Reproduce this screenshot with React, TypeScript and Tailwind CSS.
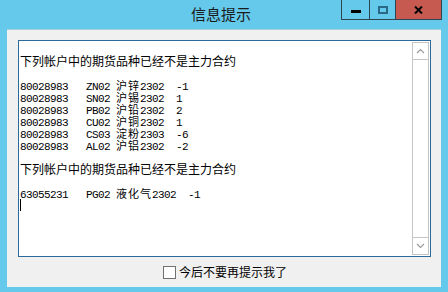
import React from 'react'

const cjk = '"Noto Sans CJK SC", "Noto Sans", sans-serif'
const mono = '"Liberation Mono", "Noto Sans CJK SC", monospace'

type Seg = string | { c: string }

// each line: plain ascii runs are 6px per char, cjk runs 12px per char
const rows: Seg[][] = [
  ['80028983   ZN02 ', { c: '沪锌' }, '2302  -1'],
  ['80028983   SN02 ', { c: '沪锡' }, '2302  1'],
  ['80028983   PB02 ', { c: '沪铅' }, '2302  2'],
  ['80028983   CU02 ', { c: '沪铜' }, '2302  1'],
  ['80028983   CS03 ', { c: '淀粉' }, '2303  -6'],
  ['80028983   AL02 ', { c: '沪铝' }, '2302  -2'],
]

function Line({ segs }: { segs: Seg[] }) {
  return (
    <div
      className="h-[12px] leading-[12px] whitespace-pre text-[11px] tracking-[-0.6px] text-black overflow-visible"
      style={{ fontFamily: mono }}
    >
      {segs.map((s, i) =>
        typeof s === 'string' ? (
          <span key={i}>{s}</span>
        ) : (
          <span key={i} className="text-[11px] leading-[12px] tracking-[1px]" style={{ fontFamily: cjk }}>{s.c}</span>
        )
      )}
    </div>
  )
}

function Heading() {
  return (
    <div className="h-[12px] leading-[12px] text-[12px] text-black whitespace-pre" style={{ fontFamily: cjk }}>
      下列帐户中的期货品种已经不是主力合约
    </div>
  )
}

function ScrollBar() {
  return (
    <div className="w-[17px] mt-[1px] mb-[1px] mr-[1px] flex flex-col border border-[#c4c4c4] bg-white">
      <div className="h-[17px] border-b border-[#c4c4c4] flex items-center justify-center">
        <svg width="9" height="6" viewBox="0 0 9 6">
          <path d="M1 5 L4.5 1.5 L8 5" fill="none" stroke="#9a9a9a" strokeWidth="1.2" />
        </svg>
      </div>
      <div className="flex-1" />
      <div className="h-[17px] border-t border-[#c4c4c4] flex items-center justify-center">
        <svg width="9" height="6" viewBox="0 0 9 6">
          <path d="M1 1 L4.5 4.5 L8 1" fill="none" stroke="#9a9a9a" strokeWidth="1.2" />
        </svg>
      </div>
    </div>
  )
}

export default function App() {
  return (
    <div className="w-[448px] h-[292px] bg-[#64c9ea] flex flex-col overflow-hidden">
      {/* Title bar */}
      <div className="h-[29px] flex shrink-0">
        <div className="flex-1" />
        <div className="pt-[3px] text-[15px] leading-[22px] text-[#1b1b1b]" style={{ fontFamily: cjk }}>
          信息提示
        </div>
        <div className="flex-1 flex justify-end items-start pr-[6px]">
          <div className="flex h-[20px] border border-t-0 border-[#2e4450]">
            <div className="w-[28px] flex items-center justify-center border-r border-[#2e4450]">
              <div className="w-[10px] h-[3px] bg-black mt-[3px]" />
            </div>
            <div className="w-[26px] flex items-center justify-center border-r border-[#2e4450]">
              <div className="w-[10px] h-[8px] border-2 border-[#2a6a86]" />
            </div>
            <div className="w-[45px] bg-[#c65a50] flex items-center justify-center">
              <svg width="9" height="8" viewBox="0 0 9 8">
                <path d="M1 0.5 L8 7.5 M8 0.5 L1 7.5" stroke="black" strokeWidth="2" />
              </svg>
            </div>
          </div>
        </div>
      </div>

      {/* Client area */}
      <div className="mx-[7px] h-[258px] bg-[#f0f0f0] border-t border-[#a8cfdd] flex flex-col">
        <div className="mt-[10px] ml-[11px] w-[413px] h-[217px] border border-[#2c6a9c] bg-white flex">
          <div className="flex-1 pl-[1px] pt-[14px] flex flex-col">
            <Heading />
            <div className="h-[12px]" />
            {rows.map((r, i) => (
              <Line key={i} segs={r} />
            ))}
            <div className="h-[12px]" />
            <Heading />
            <div className="h-[12px]" />
            <Line segs={['63055231   PG02 ', { c: '液化气' }, '2302  -1']} />
            <div className="h-[12px] w-[1px] bg-black" />
          </div>
          <ScrollBar />
        </div>
        <div className="flex justify-center items-center mt-[8px] h-[14px] pl-[2px]">
          <div className="w-[13px] h-[13px] border border-[#707070] bg-white" />
          <span className="ml-[3px] text-[12px] leading-[14px] text-black" style={{ fontFamily: cjk }}>
            今后不要再提示我了
          </span>
        </div>
      </div>
    </div>
  )
}
